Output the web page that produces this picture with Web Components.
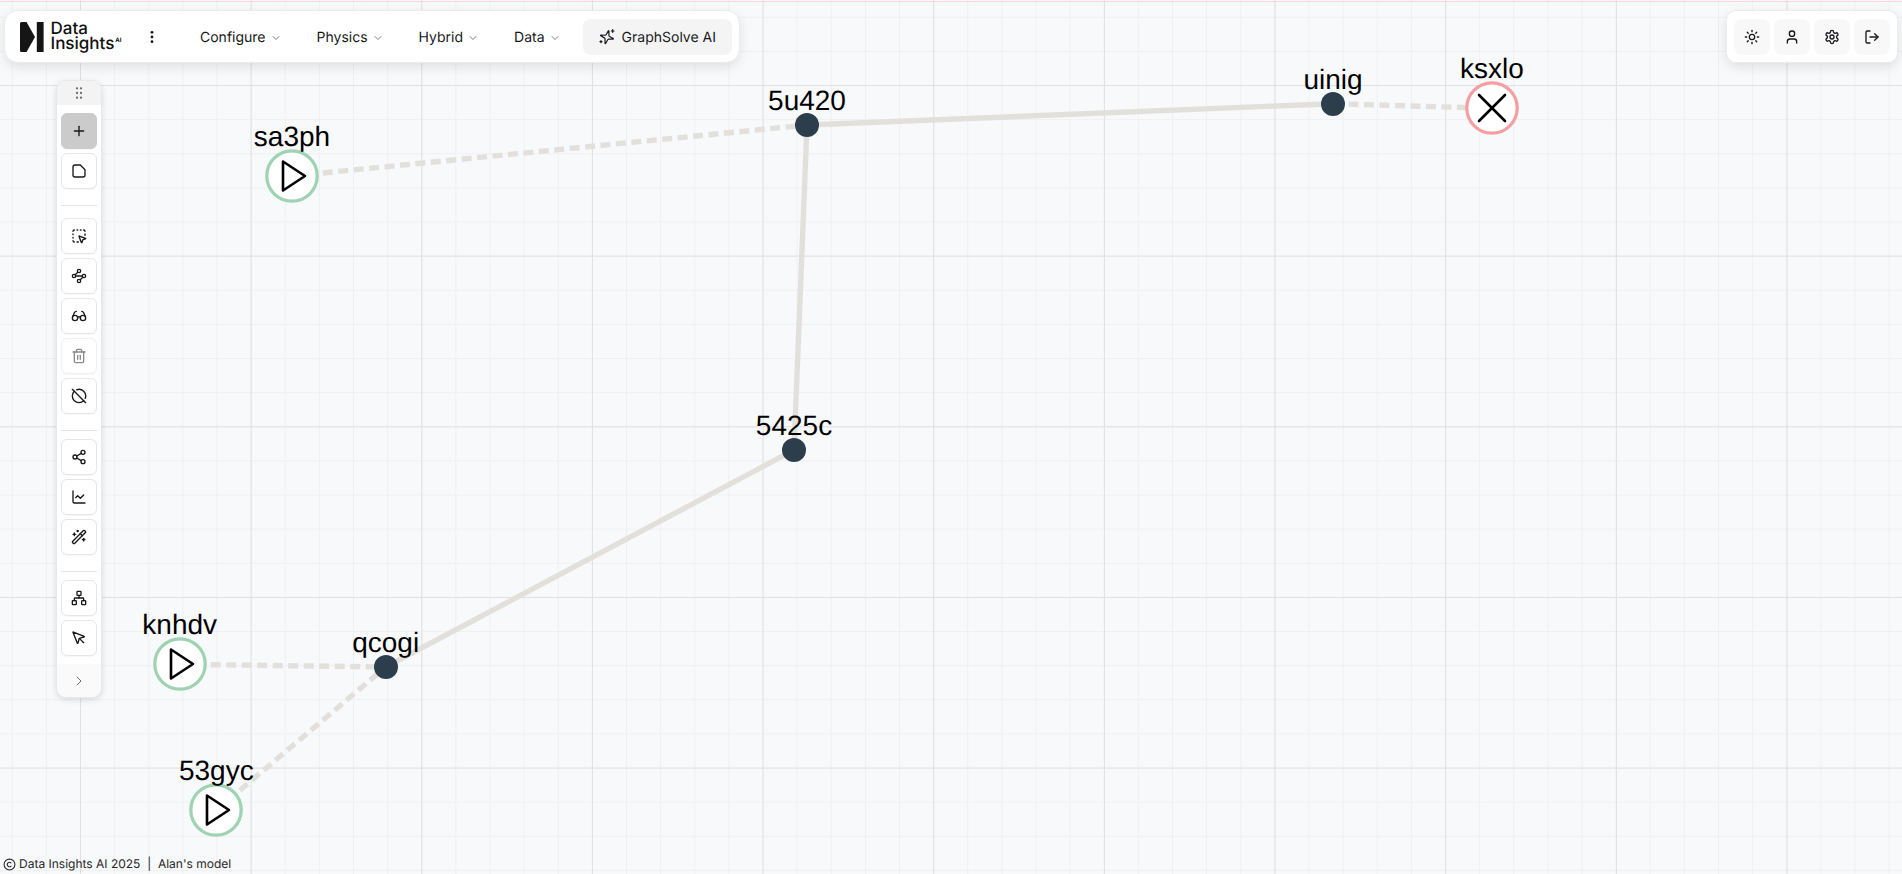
<!DOCTYPE html>
<html lang="en">
<head>
<meta charset="utf-8">
<title>Data Insights AI</title>
<style>
  html, body { margin: 0; height: 100%; overflow: hidden; }
  body { font-family: Inter, "Liberation Sans", sans-serif; color: #27272a; text-rendering: geometricPrecision; }
</style>
</head>
<body>
<graph-canvas>
  <top-nav slot="overlay">
    <nav-item label="Configure"></nav-item>
    <nav-item label="Physics"></nav-item>
    <nav-item label="Hybrid"></nav-item>
    <nav-item label="Data"></nav-item>
  </top-nav>
  <user-bar slot="overlay"></user-bar>
  <tool-rail slot="overlay"></tool-rail>
  <page-footer slot="overlay"></page-footer>
</graph-canvas>

<script>
const ICONS = {
  grip: '<g fill="currentColor" stroke="none"><circle cx="9" cy="5" r="1.7"/><circle cx="15" cy="5" r="1.7"/><circle cx="9" cy="12" r="1.7"/><circle cx="15" cy="12" r="1.7"/><circle cx="9" cy="19" r="1.7"/><circle cx="15" cy="19" r="1.7"/></g>',
  plus: '<path d="M5 12h14"/><path d="M12 5v14"/>',
  note: '<path d="M14 3H6a3 3 0 0 0-3 3v12a3 3 0 0 0 3 3h12a3 3 0 0 0 3-3V10Z"/>',
  select: '<path d="M12.034 12.681a.498.498 0 0 1 .647-.647l9 3.5a.5.5 0 0 1-.033.943l-3.444 1.068a1 1 0 0 0-.66.66l-1.067 3.443a.5.5 0 0 1-.943.033z"/><path d="M5 3a2 2 0 0 0-2 2"/><path d="M19 3a2 2 0 0 1 2 2"/><path d="M5 21a2 2 0 0 1-2-2"/><path d="M9 3h1"/><path d="M9 21h2"/><path d="M14 3h1"/><path d="M3 9v1"/><path d="M21 9v2"/><path d="M3 14v1"/>',
  waypoints: '<circle cx="12" cy="4.5" r="2.5"/><path d="m10.2 6.3-3.9 3.9"/><circle cx="4.5" cy="12" r="2.5"/><path d="M7 12h10"/><circle cx="19.5" cy="12" r="2.5"/><path d="m13.8 17.7 3.9-3.9"/><circle cx="12" cy="19.5" r="2.5"/>',
  glasses: '<circle cx="6" cy="15" r="4"/><circle cx="18" cy="15" r="4"/><path d="M14 15a2 2 0 0 0-2-2 2 2 0 0 0-2 2"/><path d="M2.5 13 5 7c.7-1.3 1.4-2 3-2"/><path d="M21.5 13 19 7c-.7-1.3-1.5-2-3-2"/>',
  trash: '<path d="M3 6h18"/><path d="M19 6v14c0 1-1 2-2 2H7c-1 0-2-1-2-2V6"/><path d="M8 6V4c0-1 1-2 2-2h4c1 0 2 1 2 2v2"/><path d="M10 11v6"/><path d="M14 11v6"/>',
  circleoff: '<path d="m2 2 20 20"/><path d="M8.35 2.69A10 10 0 0 1 21.3 15.65"/><path d="M19.08 19.08A10 10 0 1 1 4.92 4.92"/>',
  share: '<circle cx="18" cy="5" r="3"/><circle cx="6" cy="12" r="3"/><circle cx="18" cy="19" r="3"/><path d="m8.59 13.51 6.83 3.98"/><path d="m15.41 6.51-6.82 3.98"/>',
  chart: '<path d="M3 3v16a2 2 0 0 0 2 2h16"/><path d="m19 9-5 5-4-4-3 3"/>',
  wand: '<path d="m21.64 3.64-1.28-1.28a1.21 1.21 0 0 0-1.72 0L2.36 18.64a1.21 1.21 0 0 0 0 1.72l1.28 1.28a1.2 1.2 0 0 0 1.72 0L21.64 5.36a1.2 1.2 0 0 0 0-1.72"/><path d="m14 7 3 3"/><path d="M5 6v4"/><path d="M19 14v4"/><path d="M10 2v2"/><path d="M7 8H3"/><path d="M21 16h-4"/><path d="M11 3H9"/>',
  network: '<rect x="16" y="16" width="6" height="6" rx="1"/><rect x="2" y="16" width="6" height="6" rx="1"/><rect x="9" y="2" width="6" height="6" rx="1"/><path d="M5 16v-3a1 1 0 0 1 1-1h12a1 1 0 0 1 1 1v3"/><path d="M12 12V8"/>',
  pointer: '<path d="M12.586 12.586 19 19"/><path d="M3.688 3.037a.497.497 0 0 0-.651.651l6.5 15.999a.501.501 0 0 0 .947-.062l1.569-6.083a2 2 0 0 1 1.448-1.479l6.124-1.579a.5.5 0 0 0 .063-.947z"/>',
  right: '<path d="m9 18 6-6-6-6"/>',
  down: '<path d="m6 9 6 6 6-6"/>',
  sun: '<circle cx="12" cy="12" r="4"/><path d="M12 2v2"/><path d="M12 20v2"/><path d="m4.93 4.93 1.41 1.41"/><path d="m17.66 17.66 1.41 1.41"/><path d="M2 12h2"/><path d="M20 12h2"/><path d="m6.34 17.66-1.41 1.41"/><path d="m19.07 4.93-1.41 1.41"/>',
  user: '<path d="M19 21v-2a4 4 0 0 0-4-4H9a4 4 0 0 0-4 4v2"/><circle cx="12" cy="7" r="4"/>',
  gear: '<path d="M12.22 2h-.44a2 2 0 0 0-2 2v.18a2 2 0 0 1-1 1.73l-.43.25a2 2 0 0 1-2 0l-.15-.08a2 2 0 0 0-2.73.73l-.22.38a2 2 0 0 0 .73 2.73l.15.1a2 2 0 0 1 1 1.72v.51a2 2 0 0 1-1 1.74l-.15.09a2 2 0 0 0-.73 2.73l.22.38a2 2 0 0 0 2.73.73l.15-.08a2 2 0 0 1 2 0l.43.25a2 2 0 0 1 1 1.73V20a2 2 0 0 0 2 2h.44a2 2 0 0 0 2-2v-.18a2 2 0 0 1 1-1.73l.43-.25a2 2 0 0 1 2 0l.15.08a2 2 0 0 0 2.73-.73l.22-.39a2 2 0 0 0-.73-2.73l-.15-.08a2 2 0 0 1-1-1.74v-.5a2 2 0 0 1 1-1.74l.15-.09a2 2 0 0 0 .73-2.73l-.22-.38a2 2 0 0 0-2.73-.73l-.15.08a2 2 0 0 1-2 0l-.43-.25a2 2 0 0 1-1-1.73V4a2 2 0 0 0-2-2z"/><circle cx="12" cy="12" r="3"/>',
  logout: '<path d="M9 21H5a2 2 0 0 1-2-2V5a2 2 0 0 1 2-2h4"/><path d="m16 17 5-5-5-5"/><path d="M21 12H9"/>',
  more: '<g fill="currentColor" stroke="none"><circle cx="12" cy="5" r="2.1"/><circle cx="12" cy="12" r="2.1"/><circle cx="12" cy="19" r="2.1"/></g>',
  sparkles: '<path transform="rotate(15 11 12)" d="M9.937 15.5A2 2 0 0 0 8.5 14.063l-6.135-1.582a.5.5 0 0 1 0-.962L8.5 9.936A2 2 0 0 0 9.937 8.5l1.582-6.135a.5.5 0 0 1 .963 0L14.063 8.5A2 2 0 0 0 15.5 9.937l6.135 1.581a.5.5 0 0 1 0 .964L15.5 14.063a2 2 0 0 0-1.437 1.437l-1.582 6.135a.5.5 0 0 1-.963 0z"/><path d="M20.5 1v4"/><path d="M22.5 3h-4"/><path d="M3 17.5v3"/><path d="M4.5 19h-3"/>',
  copyright: '<circle cx="12" cy="12" r="10"/><path d="M14.83 14.83a4 4 0 1 1 0-5.66"/>'
};

class UiIcon extends HTMLElement {
  constructor() {
    super();
    this.attachShadow({ mode: 'open' });
  }
  connectedCallback() {
    const size = this.getAttribute('size') || 16;
    const weight = this.getAttribute('weight') || 2;
    this.shadowRoot.innerHTML = `
      <style>
        :host { display: inline-flex; flex: none; }
        svg { display: block; }
      </style>
      <svg width="${size}" height="${size}" viewBox="0 0 24 24" fill="none" stroke="currentColor"
        stroke-width="${weight}" stroke-linecap="round" stroke-linejoin="round">${ICONS[this.getAttribute('name')]}</svg>`;
  }
}
customElements.define('ui-icon', UiIcon);

class GraphNode extends HTMLElement {
  constructor() {
    super();
    this.attachShadow({ mode: 'open' });
  }
  connectedCallback() {
    const x = +this.getAttribute('x');
    const y = +this.getAttribute('y');
    const kind = this.getAttribute('kind');
    const big = kind !== 'step';
    const glyph = kind === 'start'
      ? '<path d="M-9 -14.5 L13 0 L-9 14.5 Z" fill="none" stroke="#000" stroke-width="2.6" stroke-linejoin="round"/>'
      : kind === 'end'
        ? '<path d="M-13 -13 L13 13 M13 -13 L-13 13" stroke="#000" stroke-width="2.6" stroke-linecap="round"/>'
        : '';
    const disc = big
      ? `<circle r="25.2" fill="#fff" stroke="${kind === 'start' ? '#9fd3b2' : '#f4a0a3'}" stroke-width="3.3"/>${glyph}`
      : '<circle r="12" fill="#2c3e4c"/>';
    this.shadowRoot.innerHTML = `
      <style>
        :host { position: absolute; left: ${x}px; top: ${y}px; width: 0; height: 0; }
        svg { position: absolute; left: -30px; top: -30px; overflow: visible; }
        .label {
          position: absolute; left: -100px; width: 200px; text-align: center;
          bottom: ${big ? 23 : 8}px;
          font: 28px/32px "Liberation Sans", Arial, sans-serif; color: #000; white-space: nowrap;
        }
      </style>
      <svg width="60" height="60" viewBox="-30 -30 60 60">${disc}</svg>
      <div class="label">${this.getAttribute('label')}</div>`;
  }
}
customElements.define('graph-node', GraphNode);

const NODES = [
  ['sa3ph', 292, 176, 'start'], ['knhdv', 179.7, 664.3, 'start'], ['53gyc', 216.3, 810.3, 'start'],
  ['qcogi', 385.7, 667, 'step'], ['5425c', 794, 450, 'step'], ['5u420', 807, 125, 'step'],
  ['uinig', 1333, 103.7, 'step'], ['ksxlo', 1492, 108.3, 'end']
];
const EDGES = [
  [0, 5, true], [5, 6, false], [6, 7, true], [5, 4, false], [4, 3, false], [1, 3, true], [2, 3, true]
];

class GraphCanvas extends HTMLElement {
  constructor() {
    super();
    this.attachShadow({ mode: 'open' });
    const lines = EDGES.map(([a, b, dashed]) => {
      const p = NODES[a], q = NODES[b];
      return `<line x1="${p[1]}" y1="${p[2]}" x2="${q[1]}" y2="${q[2]}" ${dashed ? 'stroke-dasharray="10 5.5"' : ''}/>`;
    }).join('');
    const nodes = NODES.map(n => `<graph-node label="${n[0]}" x="${n[1]}" y="${n[2]}" kind="${n[3]}"></graph-node>`).join('');
    this.shadowRoot.innerHTML = `
      <style>
        :host {
          display: block; position: relative; width: 100vw; height: 100vh; overflow: hidden;
          background-color: #f8f9fb;
          background-image:
            linear-gradient(to right, #dfe1e3 1px, transparent 1px),
            linear-gradient(to bottom, #dfe1e3 1px, transparent 1px),
            linear-gradient(to right, #eef0f2 1px, transparent 1px),
            linear-gradient(to bottom, #eef0f2 1px, transparent 1px);
          background-size: 170.667px 170.667px, 170.667px 170.667px, 34.133px 34.133px, 34.133px 34.133px;
          background-position: 80px 85px, 80px 85px, 80px 85px, 80px 85px;
        }
        .topline { position: absolute; left: 0; right: 0; top: 1px; height: 1px; background: #fcd4d4; }
        svg.edges { position: absolute; inset: 0; width: 100%; height: 100%; }
        svg.edges line { stroke: #e3e0dc; stroke-width: 5.4; }
      </style>
      <div class="topline"></div>
      <svg class="edges">${lines}</svg>
      ${nodes}
      <slot name="overlay"></slot>`;
  }
}
customElements.define('graph-canvas', GraphCanvas);

class NavItem extends HTMLElement {
  constructor() {
    super();
    this.attachShadow({ mode: 'open' });
  }
  connectedCallback() {
    this.shadowRoot.innerHTML = `
      <style>
        :host {
          display: inline-flex; align-items: center; gap: 4px; height: 36px; padding: 1px 17.5px 0;
          box-sizing: border-box; font: 400 14px Inter, sans-serif; color: #18181b;
        }
        ui-icon { color: #52525b; margin-top: 1px; }
      </style>
      <span>${this.getAttribute('label')}</span>
      <ui-icon name="down" size="12" weight="1.5"></ui-icon>`;
  }
}
customElements.define('nav-item', NavItem);

class TopNav extends HTMLElement {
  constructor() {
    super();
    this.attachShadow({ mode: 'open' });
    this.shadowRoot.innerHTML = `
      <style>
        :host {
          position: absolute; left: 4px; top: 10px; box-sizing: border-box; width: 736px; height: 53px;
          display: flex; align-items: center; padding: 0 7px 0 15px;
          background: #fff; border: 1px solid #ececec; border-radius: 14px;
          box-shadow: 0 4px 12px rgba(0,0,0,.1);
        }
        .logo { display: flex; align-items: center; gap: 6.5px; width: 101px; flex: none; }
        .logo svg { display: block; flex: none; }
        .word { font: 500 17px/15px Inter, sans-serif; color: #111; }
        .word div { white-space: nowrap; }
        .word sup { font: 700 6px/6px Inter, sans-serif; vertical-align: 7px; margin-left: 1px; }
        .more { color: #18181b; margin: 0 22.5px 0 23px; }
        .items { display: flex; align-items: center; }
        .ai {
          display: flex; align-items: center; gap: 7px; height: 36px; padding: 1px 16px 0; margin-left: auto;
          box-sizing: border-box; flex: none; white-space: nowrap;
          background: #f4f4f5; border-radius: 8px; font: 400 14px Inter, sans-serif; color: #18181b;
        }
      </style>
      <div class="logo">
        <svg width="24" height="30" viewBox="0 0 24 30">
          <path d="M1.5 0H6.5L15 15 6.5 30H1.5A1.5 1.5 0 0 1 0 28.5V1.5A1.5 1.5 0 0 1 1.5 0Z" fill="#151515"/>
          <rect x="16.8" y="0" width="6.8" height="30" fill="#151515"/>
        </svg>
        <div class="word"><div>Data</div><div>Insights<sup>AI</sup></div></div>
      </div>
      <ui-icon class="more" name="more" size="16"></ui-icon>
      <div class="items"><slot></slot></div>
      <div class="ai"><ui-icon name="sparkles" size="16" weight="1.8"></ui-icon><span>GraphSolve AI</span></div>`;
  }
}
customElements.define('top-nav', TopNav);

class UserBar extends HTMLElement {
  constructor() {
    super();
    this.attachShadow({ mode: 'open' });
    const buttons = ['sun', 'user', 'gear', 'logout']
      .map(n => `<div class="btn"><ui-icon name="${n}" size="16"></ui-icon></div>`).join('');
    this.shadowRoot.innerHTML = `
      <style>
        :host {
          position: absolute; left: 1726px; top: 10px; box-sizing: border-box; width: 172px; height: 53px;
          display: flex; align-items: center; justify-content: center; gap: 4px;
          background: #fff; border: 1px solid #ececec; border-radius: 10px;
          box-shadow: 0 4px 12px rgba(0,0,0,.1);
        }
        .btn {
          width: 36px; height: 36px; display: flex; align-items: center; justify-content: center;
          background: #f8f8f8; border-radius: 8px; color: #18181b;
        }
      </style>
      ${buttons}`;
  }
}
customElements.define('user-bar', UserBar);

class ToolButton extends HTMLElement {
  constructor() {
    super();
    this.attachShadow({ mode: 'open' });
  }
  connectedCallback() {
    this.shadowRoot.innerHTML = `
      <style>
        :host {
          box-sizing: border-box; width: 36px; height: 36px; display: flex; align-items: center; justify-content: center;
          background: #fff; border: 1px solid #e6e6e6; border-radius: 6px; color: #18181b;
          box-shadow: 0 1px 1px rgba(0,0,0,.03);
        }
        :host([active]) { background: #cbcbcb; border-color: #cbcbcb; }
        :host([disabled]) { color: #8a8a8a; border-color: #f0f0f0; }
      </style>
      <ui-icon name="${this.getAttribute('icon')}" size="16"></ui-icon>`;
  }
}
customElements.define('tool-button', ToolButton);

class ToolRail extends HTMLElement {
  constructor() {
    super();
    this.attachShadow({ mode: 'open' });
    this.shadowRoot.innerHTML = `
      <style>
        :host {
          position: absolute; left: 56px; top: 80px; width: 46px; box-sizing: border-box;
          display: flex; flex-direction: column; align-items: stretch;
          background: #fff; border: 1px solid #e8e8e8; border-radius: 10px; overflow: hidden;
          box-shadow: 0 2px 6px rgba(0,0,0,.12);
        }
        .handle { height: 24px; display: flex; align-items: center; justify-content: center; background: #f3f3f3; color: #6b6b6b; }
        .group { display: flex; flex-direction: column; align-items: center; gap: 4px; }
        hr { border: 0; height: 1px; background: #e4e4e7; margin: 16px 5px 0; width: 36px; box-sizing: border-box; align-self: center; }
        .foot { height: 33px; margin-top: 8px; display: flex; align-items: center; justify-content: center; background: #fafafa; color: #6b6b6b; }
      </style>
      <div class="handle"><ui-icon name="grip" size="16"></ui-icon></div>
      <div class="group" style="margin-top:8px">
        <tool-button icon="plus" active></tool-button>
        <tool-button icon="note"></tool-button>
      </div>
      <hr>
      <div class="group" style="margin-top:12px">
        <tool-button icon="select"></tool-button>
        <tool-button icon="waypoints"></tool-button>
        <tool-button icon="glasses"></tool-button>
        <tool-button icon="trash" disabled></tool-button>
        <tool-button icon="circleoff"></tool-button>
      </div>
      <hr>
      <div class="group" style="margin-top:8px">
        <tool-button icon="share"></tool-button>
        <tool-button icon="chart"></tool-button>
        <tool-button icon="wand"></tool-button>
      </div>
      <hr>
      <div class="group" style="margin-top:8px">
        <tool-button icon="network"></tool-button>
        <tool-button icon="pointer"></tool-button>
      </div>
      <div class="foot"><ui-icon name="right" size="16" weight="1.5"></ui-icon></div>`;
  }
}
customElements.define('tool-rail', ToolRail);

class PageFooter extends HTMLElement {
  constructor() {
    super();
    this.attachShadow({ mode: 'open' });
    this.shadowRoot.innerHTML = `
      <style>
        :host {
          position: absolute; left: 3px; bottom: 2px; display: flex; align-items: center; gap: 3px;
          font: 400 12px/16px Inter, sans-serif; color: #27272a; white-space: pre;
        }
      </style>
      <ui-icon name="copyright" size="13" weight="2"></ui-icon>
      <span>Data Insights AI 2025  |  Alan's model</span>`;
  }
}
customElements.define('page-footer', PageFooter);
</script>
</body>
</html>
